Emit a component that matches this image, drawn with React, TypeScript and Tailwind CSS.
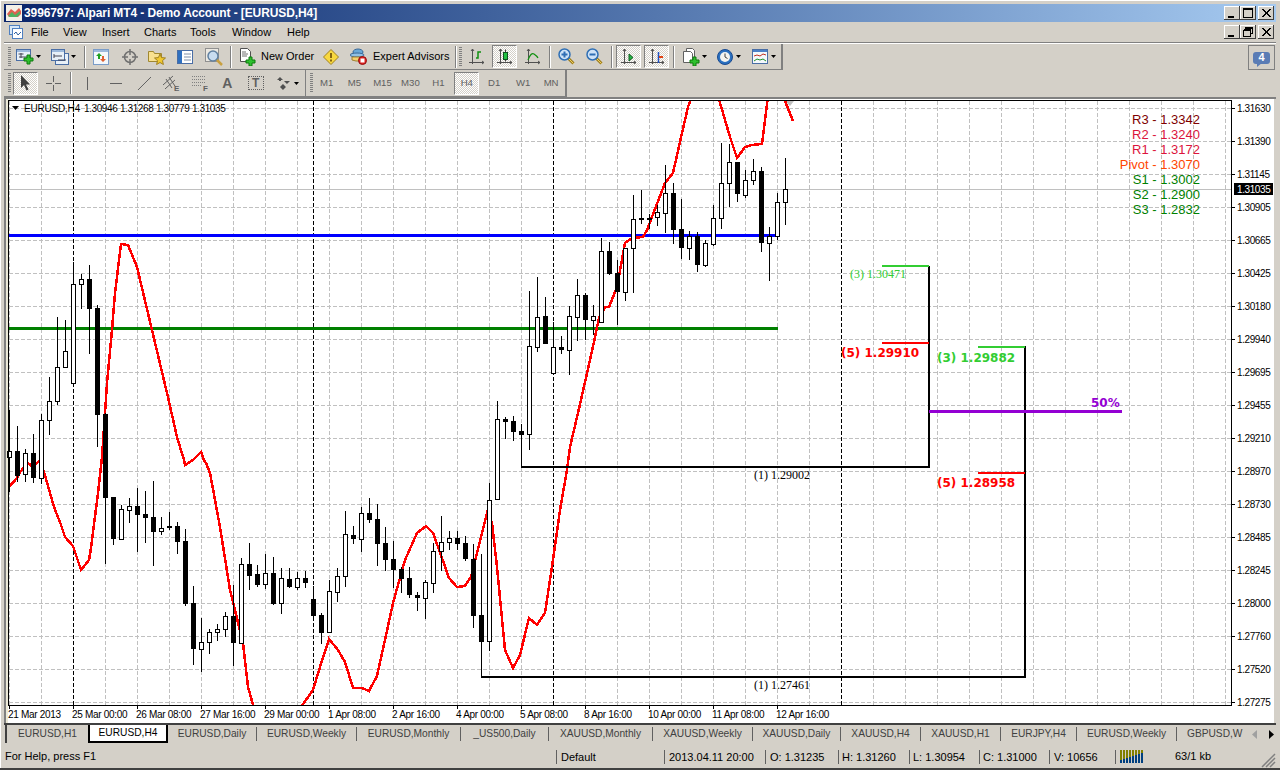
import type { ReactNode } from "react"

const candles: [number, number, number, number, number][] = [
  [410, 451, 457, 492, 0], [426, 451, 476, 482, 1], [449, 453, 474, 482, 0], [434, 453, 478, 483, 1],
  [414, 420, 478, 484, 0], [377, 401, 420, 435, 0], [317, 367, 401, 405, 0], [320, 351, 367, 367, 0],
  [262, 284, 383, 385, 0], [274, 279, 284, 309, 0], [265, 279, 309, 354, 1], [305, 308, 415, 447, 1],
  [413, 414, 498, 564, 1], [497, 497, 539, 545, 1], [505, 509, 539, 539, 0], [498, 506, 510, 523, 0],
  [488, 506, 515, 552, 1], [491, 514, 518, 543, 1], [481, 517, 532, 566, 1], [517, 528, 531, 535, 0],
  [512, 526, 528, 530, 1], [522, 526, 542, 554, 1], [529, 541, 604, 606, 1], [586, 603, 649, 665, 1],
  [618, 642, 649, 672, 0], [629, 632, 642, 654, 0], [624, 629, 632, 641, 0], [612, 616, 629, 637, 0],
  [585, 616, 643, 666, 1], [558, 564, 643, 644, 0], [543, 564, 576, 590, 1], [565, 574, 585, 587, 1],
  [554, 573, 584, 589, 0], [557, 573, 604, 605, 1], [568, 578, 603, 614, 0], [568, 579, 587, 588, 1],
  [572, 578, 587, 590, 0], [571, 578, 583, 588, 1], [586, 599, 616, 620, 1], [613, 615, 633, 644, 1],
  [580, 591, 632, 632, 0], [568, 576, 592, 602, 0], [511, 534, 576, 587, 0], [526, 535, 539, 544, 1],
  [507, 513, 539, 552, 0], [498, 513, 520, 523, 1], [504, 519, 544, 566, 1], [527, 543, 560, 571, 1],
  [541, 559, 570, 588, 1], [567, 569, 579, 593, 1], [567, 578, 595, 598, 1], [592, 595, 598, 611, 1],
  [580, 582, 598, 619, 0], [543, 551, 583, 593, 0], [516, 542, 551, 571, 0], [531, 538, 542, 550, 0],
  [531, 538, 544, 550, 1], [536, 543, 559, 561, 1], [544, 559, 616, 628, 1], [554, 615, 642, 677, 1],
  [483, 500, 641, 651, 0], [401, 419, 499, 499, 0], [417, 419, 422, 439, 1], [416, 421, 432, 441, 1],
  [424, 431, 435, 467, 1], [291, 346, 434, 450, 0], [277, 317, 347, 352, 0], [297, 316, 344, 344, 1],
  [322, 347, 373, 374, 0], [336, 347, 350, 354, 1], [306, 316, 350, 375, 0], [279, 295, 317, 341, 0],
  [293, 295, 320, 340, 1], [305, 316, 320, 335, 0], [238, 251, 322, 322, 0], [242, 251, 274, 275, 1],
  [260, 273, 292, 325, 1], [248, 248, 292, 301, 0], [195, 219, 248, 293, 0], [190, 218, 219, 224, 1],
  [214, 218, 219, 229, 1], [205, 212, 217, 226, 0], [165, 193, 213, 233, 0], [183, 193, 230, 244, 1],
  [199, 229, 248, 259, 1], [231, 236, 248, 260, 0], [232, 236, 265, 272, 1], [240, 243, 265, 267, 0],
  [205, 218, 244, 246, 0], [143, 183, 218, 229, 0], [144, 162, 183, 207, 0], [162, 162, 194, 202, 1],
  [170, 180, 195, 198, 0], [159, 171, 180, 185, 0], [167, 171, 243, 252, 1], [227, 236, 243, 281, 0],
  [193, 202, 236, 240, 0], [158, 189, 202, 225, 0],
]

const redLine =
  "8,488 17,478 20,472 28,463 33,467 39,461 44,472 50,493 55,510 60,522 65,537 73,546 81,570 89,560 91,548 98,493 102,457 105,413 107,383 112,330 115,293 121,244 128,245 137,267 152,330 167,393 177,437 184,460 185,465 193,460 201,452 204,460 206,463 210,473 220,527 230,590 243,643 248,687 255,712 298,712 306,700 313,690 320,667 329,639 338,650 345,662 353,688 362,688 369,691 377,676 385,640 393,603 405,560 417,533 426,526 433,533 442,558 449,578 457,587 465,586 471,577 482,533 487,513 492,523 497,567 505,650 513,668 520,655 529,618 537,625 545,613 553,560 560,510 567,470 570,447 578,413 590,360 595,337 599,318 605,307 609,307 617,287 625,243 632,238 643,237 647,230 665,183 673,173 682,133 688,107 692,96 718,96 730,137 737,158 745,147 752,145 762,144 765,120 768,96 783,96 793,121"

const priceLabels = [
  "1.31630", "1.31390", "1.31145", "1.30905", "1.30665", "1.30425", "1.30180", "1.29940", "1.29695", "1.29455",
  "1.29210", "1.28970", "1.28730", "1.28485", "1.28245", "1.28000", "1.27760", "1.27520", "1.27275",
]

const timeLabels = [
  "21 Mar 2013", "25 Mar 00:00", "26 Mar 08:00", "27 Mar 16:00", "29 Mar 00:00", "1 Apr 08:00", "2 Apr 16:00",
  "4 Apr 00:00", "5 Apr 08:00", "8 Apr 16:00", "10 Apr 00:00", "11 Apr 08:00", "12 Apr 16:00",
]

const pivots: [string, string, number][] = [
  ["R3 - 1.3342", "#800000", 124], ["R2 - 1.3240", "#dc143c", 139], ["R1 - 1.3172", "#dc143c", 154],
  ["Pivot - 1.3070", "#ff4500", 169], ["S1 - 1.3002", "#008000", 184], ["S2 - 1.2900", "#008000", 199],
  ["S3 - 1.2832", "#008000", 214],
]

const sans = "Liberation Sans, sans-serif"
const serif = "Liberation Serif, serif"
const heavy = "DejaVu Sans, sans-serif"

function Chart() {
  const gridX = Array.from({ length: 39 }, (_, i) => 9 + 32 * i)
  const gridY = priceLabels.map((_, i) => 108 + 33 * i)
  return (
    <svg className="block" width={1272} height={624} viewBox="4 99 1272 624" fontFamily={sans}>
      <defs>
        <clipPath id="plot">
          <rect x={9} y={101} width={1222} height={604} />
        </clipPath>
      </defs>
      <rect x={4} y={99} width={1272} height={624} fill="#ffffff" />
      <rect x={4} y={99} width={2} height={624} fill="#808080" />
      <rect x={6} y={99} width={2} height={624} fill="#ece9d8" />
      <rect x={1274} y={99} width={2} height={624} fill="#d4d0c8" />
      <g shapeRendering="crispEdges">
        {gridX.map((x) => (
          <line key={x} x1={x + 0.5} x2={x + 0.5} y1={101} y2={705} stroke="#c0c0c0" strokeDasharray="4 2" />
        ))}
        {gridY.map((y) => (
          <line key={y} x1={9} x2={1231} y1={y + 0.5} y2={y + 0.5} stroke="#c0c0c0" strokeDasharray="4 2" />
        ))}
        {[73, 313, 553, 841].map((x) => (
          <line key={x} x1={x + 0.5} x2={x + 0.5} y1={101} y2={705} stroke="#000000" strokeDasharray="4 2" />
        ))}
        <rect x={9} y={189} width={1222} height={1} fill="#c0c0c0" />
        <rect x={9} y={234} width={769} height={3} fill="#0000ff" />
        <rect x={9} y={327} width={769} height={3} fill="#008000" />
      </g>
      <polygon points="785,101 794,101 790,106" fill="#c0c0c0" />
      <g clipPath="url(#plot)">
        <polyline points={redLine} fill="none" stroke="#ff0000" strokeWidth={2.5} shapeRendering="crispEdges" />
      </g>
      <g shapeRendering="crispEdges">
        {candles.map(([hi, top, bot, lo, dark], i) => {
          const x = 9 + 8 * i
          return (
            <g key={i}>
              <rect x={x} y={hi} width={1} height={lo - hi} fill="#000000" />
              {dark ? (
                <rect x={x - 2} y={top} width={5} height={Math.max(bot - top, 2)} fill="#000000" />
              ) : (
                <rect x={x - 1.5} y={top + 0.5} width={4} height={Math.max(bot - top, 1)} fill="#ffffff" stroke="#000000" />
              )}
            </g>
          )
        })}
        <rect x={521} y={466} width={409} height={2} fill="#000000" />
        <rect x={928} y={266} width={2} height={202} fill="#000000" />
        <rect x={882} y={265} width={47} height={2} fill="#32cd32" />
        <rect x={882} y={342} width={47} height={2} fill="#ff0000" />
        <rect x={481} y={676} width={545} height={2} fill="#000000" />
        <rect x={1024} y={346} width={2} height={332} fill="#000000" />
        <rect x={978} y={346} width={47} height={2} fill="#32cd32" />
        <rect x={978} y={472} width={47} height={2} fill="#ff0000" />
        <rect x={929} y={410} width={193} height={3} fill="#9400d3" />
        <rect x={8} y={100} width={1224} height={1} fill="#000000" />
        <rect x={8} y={100} width={1} height={606} fill="#000000" />
        <rect x={1231} y={100} width={1} height={606} fill="#000000" />
        <rect x={8} y={705} width={1224} height={1} fill="#000000" />
        {gridY.map((y) => (
          <rect key={y} x={1232} y={y} width={3} height={1} fill="#000000" />
        ))}
        {timeLabels.map((_, i) => (
          <rect key={i} x={9 + 64 * i} y={706} width={1} height={3} fill="#000000" />
        ))}
      </g>

      <polygon points="12,106 19,106 15.5,110" fill="#000000" />
      <text x={24} y={112} fontSize={10} letterSpacing={-0.2}>EURUSD,H4</text>
      <text x={84} y={112} fontSize={10} letterSpacing={-0.4}>1.30946</text>
      <text x={120} y={112} fontSize={10} letterSpacing={-0.4}>1.31268</text>
      <text x={156} y={112} fontSize={10} letterSpacing={-0.4}>1.30779</text>
      <text x={192} y={112} fontSize={10} letterSpacing={-0.4}>1.31035</text>

      {pivots.map(([label, color, y]) => (
        <text key={label} x={1200} y={y} fontSize={13} fill={color} textAnchor="end">{label}</text>
      ))}

      <text x={850} y={278} fontFamily={serif} fontSize={12} fill="#32cd32">(3) 1.30471</text>
      <text x={754} y={479} fontFamily={serif} fontSize={12}>(1) 1.29002</text>
      <text x={754} y={689} fontFamily={serif} fontSize={12}>(1) 1.27461</text>
      <text x={841} y={357} fontFamily={heavy} fontWeight={700} fontSize={12} fill="#ff0000">(5) 1.29910</text>
      <text x={937} y={362} fontFamily={heavy} fontWeight={700} fontSize={12} fill="#32cd32">(3) 1.29882</text>
      <text x={937} y={487} fontFamily={heavy} fontWeight={700} fontSize={12} fill="#ff0000">(5) 1.28958</text>
      <text x={1091} y={407} fontFamily={heavy} fontWeight={700} fontSize={12} fill="#9400d3">50%</text>

      {priceLabels.map((p, i) => (
        <text key={p} x={1237} y={112 + 33 * i} fontSize={10} letterSpacing={-0.4}>{p}</text>
      ))}
      <rect x={1234} y={183} width={39} height={12} fill="#000000" />
      <text x={1237} y={193} fontSize={10} letterSpacing={-0.4} fill="#ffffff">1.31035</text>
      {timeLabels.map((t, i) => (
        <text key={t} x={8 + 64 * i} y={718} fontSize={10} letterSpacing={-0.3}>{t}</text>
      ))}
    </svg>
  )
}

function WinButton({ kind }: { kind: "min" | "max" | "restore" | "close" }) {
  return (
    <div className="flex h-[14px] w-[16px] items-center justify-center bg-[#d4d0c8] shadow-[inset_-1px_-1px_#404040,inset_1px_1px_#ffffff]">
      <svg width={12} height={10} viewBox="0 0 12 10" shapeRendering="crispEdges" fill="none" stroke="#000000">
        {kind === "min" && <path d="M2 8.5h6" strokeWidth={2} />}
        {kind === "max" && <path d="M1.5 0.5h9v9h-9zM1.5 1.5h9" />}
        {kind === "restore" && <path d="M3.5 2.5v-2h7v6h-2M1.5 3.5h7v6h-7zM1.5 2.5h7M3.5 1.5h7" />}
        {kind === "close" && <path d="M2 1l8 8M3 1l8 8M10 1l-8 8M11 1l-8 8" shapeRendering="auto" />}
      </svg>
    </div>
  )
}

function Arrow({ className = "" }: { className?: string }) {
  return (
    <svg className={className} width={5} height={3} viewBox="0 0 5 3">
      <path d="M0 0h5L2.5 3z" fill="#000000" />
    </svg>
  )
}

function Grip({ className = "" }: { className?: string }) {
  return (
    <div className={`h-[20px] w-[3px] bg-[repeating-linear-gradient(to_bottom,#808080_0_1px,transparent_1px_2px)] ${className}`} />
  )
}

function Sep({ className = "" }: { className?: string }) {
  return <div className={`h-[22px] w-[2px] border-x border-l-[#808080] border-r-[#ffffff] ${className}`} />
}

function Pressed({ className = "", children }: { className?: string; children: ReactNode }) {
  return (
    <div
      className={`flex h-[23px] w-[25px] items-center justify-center border border-t-[#808080] border-l-[#808080] border-r-[#ffffff] border-b-[#ffffff] bg-[repeating-conic-gradient(#d4d0c8_0_25%,#ffffff_0_50%)] bg-[length:2px_2px] ${className}`}
    >
      {children}
    </div>
  )
}

const plus = "M0 -4h3v3h3v3h-3v3h-3v-3h-3v-3h3z"

function Plus({ x, y }: { x: number; y: number }) {
  return <path d={plus} transform={`translate(${x} ${y})`} fill="#2ec02e" stroke="#0d7a0d" />
}

function Axes({ children }: { children?: ReactNode }) {
  return (
    <svg width={16} height={18} viewBox="0 0 16 18" fill="none">
      <path d="M3.5 1v15M0 14.5h15M2 3l1.5-2 1.5 2M13 13l2 1.5-2 1.5" stroke="#505050" />
      {children}
    </svg>
  )
}

function Lens({ sign, className = "" }: { sign: "in" | "out"; className?: string }) {
  return (
    <svg className={className} width={17} height={17} viewBox="0 0 17 17" fill="none">
      <path d="M10 10l5.5 5.5" stroke="#a08020" strokeWidth={3} />
      <path d="M10 10l5.5 5.5" stroke="#f0d060" strokeWidth={1} />
      <circle cx={6.5} cy={6.5} r={5.5} fill="#cfe3f7" stroke="#2f6fb5" strokeWidth={1.5} />
      <path d={sign === "in" ? "M3.5 6.5h6M6.5 3.5v6" : "M3.5 6.5h6"} stroke="#2f6fb5" strokeWidth={2} />
    </svg>
  )
}

function Toolbars() {
  return (
    <>
      <div className="flex h-[26px] w-[779px] items-center border-r-2 border-b border-[#808080]">
        <Grip className="ml-[4px]" />
        <svg className="ml-[5px]" width={18} height={16} viewBox="0 0 18 16">
          <rect x={0.5} y={0.5} width={14} height={11} fill="#e8f0f8" stroke="#4a6ea5" />
          <rect x={1} y={1} width={13} height={2} fill="#9db9dc" />
          <path d="M2.5 5h5M5 4v5M3 8h8" stroke="#445" fill="none" />
          <Plus x={11} y={10} />
        </svg>
        <Arrow className="ml-[2px]" />
        <svg className="ml-[10px]" width={18} height={16} viewBox="0 0 18 16">
          <rect x={4.5} y={4.5} width={13} height={11} fill="#e8f0f8" stroke="#4a6ea5" />
          <rect x={0.5} y={0.5} width={13} height={11} fill="#e8f0f8" stroke="#4a6ea5" />
          <rect x={1} y={1} width={12} height={2} fill="#9db9dc" />
          <path d="M3 5v4M3 7h8M7 11h8" stroke="#445" fill="none" />
        </svg>
        <Arrow className="ml-[2px]" />
        <Sep className="ml-[8px]" />
        <svg className="ml-[7px]" width={16} height={16} viewBox="0 0 16 16">
          <rect x={0.5} y={0.5} width={15} height={15} fill="#f4f8fc" stroke="#7a9cc8" />
          <rect x={1} y={1} width={14} height={2} fill="#9db9dc" />
          <path d="M6 4l3 3H7v3H5V7H3z" fill="#20a020" />
          <path d="M10 13l-3-3h2V7h2v3h2z" fill="#e06030" />
        </svg>
        <svg className="ml-[13px]" width={16} height={16} viewBox="0 0 16 16" fill="none" stroke="#707070">
          <circle cx={8} cy={8} r={5.5} strokeWidth={1.5} />
          <path d="M8 0v6M8 10v6M0 8h6M10 8h6" strokeWidth={1.5} />
        </svg>
        <svg className="ml-[10px]" width={18} height={16} viewBox="0 0 18 16">
          <path d="M0.5 2.5h5l1 2h7v8h-13z" fill="#f8e090" stroke="#a08830" />
          <path d="M12 5l1.6 3.6 3.9.4-3 2.6.9 3.9-3.4-2-3.4 2 .9-3.9-3-2.6 3.9-.4z" fill="#f0c830" stroke="#a08020" />
        </svg>
        <svg className="ml-[11px]" width={16} height={16} viewBox="0 0 16 16">
          <rect x={0.5} y={1.5} width={15} height={13} fill="#ffffff" stroke="#4a6ea5" />
          <rect x={1} y={2} width={4} height={12} fill="#2f70c0" />
          <path d="M7 5h7M7 8h7M7 11h7" stroke="#8090a8" />
        </svg>
        <svg className="ml-[12px]" width={18} height={18} viewBox="0 0 18 18" fill="none">
          <rect x={0.5} y={0.5} width={13} height={13} fill="#ece9e2" stroke="#909090" />
          <path d="M11 11l6 6" stroke="#c8a040" strokeWidth={2.5} />
          <circle cx={8} cy={8} r={5} fill="#c8dcf0" stroke="#6080a0" strokeWidth={1.5} />
        </svg>
        <Sep className="ml-[7px]" />
        <svg className="ml-[8px]" width={16} height={18} viewBox="0 0 16 18">
          <path d="M0.5 0.5h7l3 3v10h-10z" fill="#ffffff" stroke="#505050" />
          <path d="M2 4h4M2 6h6M2 8h5" stroke="#707070" />
          <Plus x={9} y={13} />
        </svg>
        <span className="ml-[5px] w-[51px] whitespace-nowrap text-[11px] text-[#000000]">New Order</span>
        <svg className="ml-[11px]" width={16} height={16} viewBox="0 0 16 16">
          <path d="M8 0.5L15.5 8 8 15.5 0.5 8z" fill="#f8d840" stroke="#a08020" />
          <path d="M8 4v5M8 10.5v2" stroke="#604000" strokeWidth={1.5} />
        </svg>
        <svg className="ml-[11px]" width={17} height={17} viewBox="0 0 17 17">
          <ellipse cx={8} cy={4} rx={5} ry={3} fill="#6aa8d8" stroke="#386898" />
          <ellipse cx={7} cy={7} rx={7} ry={2} fill="#90c0e4" stroke="#386898" />
          <path d="M2 9h11v4H6l-4-1z" fill="#f4d070" stroke="#a08030" />
          <circle cx={12.5} cy={12.5} r={4} fill="#e02020" stroke="#901010" />
          <rect x={10.5} y={10.5} width={4} height={4} fill="#ffffff" />
        </svg>
        <span className="ml-[6px] w-[76px] whitespace-nowrap text-[11px] text-[#000000]">Expert Advisors</span>
        <Sep className="ml-[6px]" />
        <Grip className="ml-[2px]" />
        <div className="ml-[7px]">
          <Axes>
            <path d="M7 10h2V4h3" stroke="#109010" strokeWidth={1.5} />
          </Axes>
        </div>
        <Pressed className="ml-[7px]">
          <Axes>
            <path d="M8.5 1.5v12" stroke="#404040" />
            <rect x={6.5} y={4.5} width={4} height={7} fill="#20c040" stroke="#105020" />
          </Axes>
        </Pressed>
        <div className="ml-[8px]">
          <Axes>
            <path d="M3 12q3-8 6-6t4 4" stroke="#109010" strokeWidth={1.2} />
          </Axes>
        </div>
        <Sep className="ml-[8px]" />
        <Lens sign="in" className="ml-[7px]" />
        <Lens sign="out" className="ml-[11px]" />
        <Sep className="ml-[8px]" />
        <Pressed className="ml-[3px]">
          <Axes>
            <path d="M8 6l4 3.5L8 13z" fill="#20b040" stroke="#106020" />
          </Axes>
        </Pressed>
        <Pressed className="ml-[3px]">
          <Axes>
            <path d="M9.5 4v11" stroke="#2050c0" strokeWidth={1.5} />
            <path d="M10 9h4" stroke="#e04010" strokeWidth={2} />
          </Axes>
        </Pressed>
        <Sep className="ml-[4px]" />
        <svg className="ml-[8px]" width={17} height={18} viewBox="0 0 17 18">
          <path d="M3.5 0.5h6l2 2v9h-8z" fill="#ffffff" stroke="#606060" />
          <path d="M0.5 3.5h7l2 2v9h-9z" fill="#ffffff" stroke="#606060" />
          <Plus x={10} y={13} />
        </svg>
        <Arrow className="ml-[2px]" />
        <svg className="ml-[10px]" width={16} height={16} viewBox="0 0 16 16">
          <circle cx={8} cy={8} r={7.5} fill="#2a70c0" stroke="#1a4a90" />
          <circle cx={8} cy={8} r={5} fill="#f4f4f0" />
          <path d="M8 4.5V8l2.5 1.5" stroke="#404040" fill="none" />
        </svg>
        <Arrow className="ml-[3px]" />
        <svg className="ml-[11px]" width={16} height={15} viewBox="0 0 16 15">
          <rect x={0.5} y={0.5} width={15} height={14} fill="#f4f8fc" stroke="#4a6ea5" />
          <rect x={1} y={1} width={14} height={2} fill="#4a80c8" />
          <path d="M2 7l3-1 3 1 3-2 3 1" stroke="#c03020" fill="none" />
          <path d="M2 12l3-2 3 1 3-1 3 2" stroke="#20902a" fill="none" />
        </svg>
        <Arrow className="ml-[3px]" />
      </div>
      <div className="flex h-[27px] w-[563px] items-center border-r-2 border-b border-[#808080] text-[9.6px] text-[#606060]">
        <Grip className="ml-[4px]" />
        <Pressed className="ml-[2px]">
          <svg width={10} height={16} viewBox="0 0 10 16">
            <path d="M1 0v13l3-3 2.5 5.5 2-1-2.5-5H10z" fill="#404040" />
          </svg>
        </Pressed>
        <svg className="ml-[8px]" width={15} height={15} viewBox="0 0 15 15" stroke="#606060" shapeRendering="crispEdges">
          <path d="M7.5 0v6M7.5 9v6M0 7.5h6M9 7.5h6" />
        </svg>
        <Sep className="ml-[9px]" />
        <svg className="ml-[8px]" width={15} height={15} viewBox="0 0 15 15" stroke="#606060" shapeRendering="crispEdges">
          <path d="M7.5 1v13" />
        </svg>
        <svg className="ml-[14px]" width={14} height={15} viewBox="0 0 14 15" stroke="#606060" shapeRendering="crispEdges">
          <path d="M1 7.5h12" />
        </svg>
        <svg className="ml-[14px]" width={15} height={15} viewBox="0 0 15 15" stroke="#606060">
          <path d="M1 14L14 1" />
        </svg>
        <svg className="ml-[11px]" width={17} height={17} viewBox="0 0 17 17" fill="none" stroke="#606060">
          <path d="M0 10L10 1M2 14L12 5M3 4l6 9M6 2l6 9" />
          <text x={11} y={16} fontFamily={sans} fontSize={8} fontWeight={700} fill="#606060" stroke="none">E</text>
        </svg>
        <svg className="ml-[12px]" width={16} height={17} viewBox="0 0 16 17" fill="none" stroke="#808080" shapeRendering="crispEdges" strokeDasharray="1 1">
          <path d="M0 1.5h14M0 4.5h14M0 7.5h14M0 10.5h10" />
          <text x={11} y={16} fontFamily={sans} fontSize={8} fontWeight={700} fill="#606060" stroke="none" strokeDasharray="0">F</text>
        </svg>
        <span className="ml-[13px] w-[13px] text-center text-[14px] font-bold text-[#606060]">A</span>
        <div className="ml-[14px] flex h-[14px] w-[16px] items-center justify-center border border-dotted border-[#606060] text-[12px] font-bold text-[#606060]">
          T
        </div>
        <svg className="ml-[13px]" width={15} height={15} viewBox="0 0 15 15" fill="#505050">
          <path d="M3 1l3 3H4v1H2V4H0zM7 5l3 3 3-3zM6 8l-3 3 3 3 3-3z" />
        </svg>
        <Arrow className="ml-[2px]" />
        <div className="ml-[6px] h-[26px] w-px bg-[#808080]" />
        <Grip className="ml-[4px]" />
        <span className="w-[28px] text-center">M1</span>
        <span className="w-[28px] text-center">M5</span>
        <span className="w-[28px] text-center">M15</span>
        <span className="w-[28px] text-center">M30</span>
        <span className="w-[28px] text-center">H1</span>
        <Pressed className="ml-[2px]">H4</Pressed>
        <span className="ml-[1px] w-[28px] text-center">D1</span>
        <span className="ml-[1px] w-[28px] text-center">W1</span>
        <span className="w-[28px] text-center">MN</span>
      </div>
    </>
  )
}

const Divider = () => <div className="h-[14px] w-px bg-[#606060]" />

export default function App() {
  return (
    <div className="flex h-[770px] w-[1280px] flex-col overflow-hidden bg-[#d4d0c8] font-['Liberation_Sans',sans-serif] text-[11px] text-[#000000] shadow-[inset_1px_1px_#ffffff]">
      <div className="mx-1 mt-1 flex h-[18px] items-center bg-gradient-to-r from-[#0a246a] to-[#a6caf0]">
        <svg className="ml-[2px]" width={16} height={16} viewBox="0 0 16 16">
          <rect width={16} height={16} fill="#f4f0e8" />
          <path d="M1 9l4-5 4 3 4-4 2 3v3l-3 3H3z" fill="#e06050" />
          <path d="M2 11l4-4 3 3 5-4v3l-3 3H4z" fill="#50b060" />
        </svg>
        <span className="ml-[2px] text-[12px] font-bold tracking-[-0.1px] whitespace-nowrap text-[#ffffff]">
          3996797: Alpari MT4 - Demo Account - [EURUSD,H4]
        </span>
        <div className="mr-[2px] ml-auto flex">
          <WinButton kind="min" />
          <WinButton kind="max" />
          <div className="ml-[2px]">
            <WinButton kind="close" />
          </div>
        </div>
      </div>
      <div className="mx-1 flex h-[20px] items-center">
        <svg className="ml-[5px]" width={14} height={14} viewBox="0 0 14 14">
          <rect x={0.5} y={0.5} width={10} height={9} fill="#d8e8f8" stroke="#5080c0" />
          <rect x={3.5} y={3.5} width={10} height={10} fill="#ffffff" stroke="#5080c0" />
          <path d="M5 9l2-2 2 3 3-3" stroke="#3060a0" fill="none" />
        </svg>
        <span className="ml-[8px] w-[16px]">File</span>
        <span className="ml-[16px] w-[23px]">View</span>
        <span className="ml-[16px] w-[27px]">Insert</span>
        <span className="ml-[15px] w-[32px]">Charts</span>
        <span className="ml-[14px] w-[27px]">Tools</span>
        <span className="ml-[15px] w-[39px]">Window</span>
        <span className="ml-[16px]">Help</span>
        <div className="mr-[2px] ml-auto flex">
          <WinButton kind="min" />
          <WinButton kind="restore" />
          <div className="ml-[2px]">
            <WinButton kind="close" />
          </div>
        </div>
      </div>
      <div className="mx-1 h-[2px] border-t border-b border-t-[#808080] border-b-[#ffffff]" />
      <div className="relative mx-1">
        <Toolbars />
        <div className="absolute top-[1px] right-[1px] flex h-[25px] w-[27px] items-center justify-center border border-[#808080]">
          <div className="relative flex h-[12px] w-[17px] items-center justify-center rounded-[3px] bg-[#5a7cb5] text-[11px] font-bold text-[#ffffff]">
            4
            <div className="absolute top-[11px] left-[4px] h-0 w-0 border-t-[4px] border-r-[5px] border-t-[#5a7cb5] border-r-transparent" />
          </div>
        </div>
      </div>
      <div className="mx-1 border-t-2 border-[#808080]">
        <Chart />
      </div>
      <div className="mx-1 flex h-[20px] items-center border-t-2 border-[#404040] text-[10.2px] whitespace-nowrap text-[#404040]">
        <div className="ml-[1px] flex h-full w-[83px] items-center justify-center border-l-2 border-[#404040]">EURUSD,H1</div>
        <div className="flex h-full w-[80px] items-center justify-center border-x-2 border-b-2 border-[#000000] bg-[#ffffff] text-[#000000]">EURUSD,H4</div>
        <div className="flex w-[88px] justify-center"><span>EURUSD,Daily</span></div>
        <Divider />
        <div className="flex w-[99px] justify-center">EURUSD,Weekly</div>
        <Divider />
        <div className="flex w-[103px] justify-center">EURUSD,Monthly</div>
        <Divider />
        <div className="flex w-[87px] justify-center">_US500,Daily</div>
        <Divider />
        <div className="flex w-[103px] justify-center">XAUUSD,Monthly</div>
        <Divider />
        <div className="flex w-[99px] justify-center">XAUUSD,Weekly</div>
        <Divider />
        <div className="flex w-[87px] justify-center">XAUUSD,Daily</div>
        <Divider />
        <div className="flex w-[79px] justify-center">XAUUSD,H4</div>
        <Divider />
        <div className="flex w-[79px] justify-center">XAUUSD,H1</div>
        <Divider />
        <div className="flex w-[75px] justify-center">EURJPY,H4</div>
        <Divider />
        <div className="flex w-[99px] justify-center">EURUSD,Weekly</div>
        <Divider />
        <div className="ml-[10px] w-[60px]">GBPUSD,W</div>
        <svg className="ml-[5px]" width={5} height={9} viewBox="0 0 5 9">
          <path d="M5 0v9L0 4.5z" fill="#a0a0a0" />
        </svg>
        <svg className="ml-[12px]" width={5} height={9} viewBox="0 0 5 9">
          <path d="M0 0v9l5-4.5z" fill="#000000" />
        </svg>
      </div>
      <div className="mt-[2px] flex h-[23px] items-center text-[11px] whitespace-nowrap">
        <div className="w-[556px] pl-[5px]">For Help, press F1</div>
        <div className="h-[14px] w-[108px] border-l border-[#606060] pl-[4px] leading-[14px]">Default</div>
        <div className="h-[14px] w-[101px] border-l border-[#606060] pl-[4px] leading-[14px]">2013.04.11 20:00</div>
        <div className="h-[14px] w-[73px] border-l border-[#606060] pl-[4px] leading-[14px]">O: 1.31235</div>
        <div className="h-[14px] w-[71px] border-l border-[#606060] pl-[3px] leading-[14px]">H: 1.31260</div>
        <div className="h-[14px] w-[70px] border-l border-[#606060] pl-[3px] leading-[14px]">L: 1.30954</div>
        <div className="h-[14px] w-[70px] border-l border-[#606060] pl-[3px] leading-[14px]">C: 1.31000</div>
        <div className="h-[14px] w-[66px] border-l border-[#606060] pl-[4px] leading-[14px]">V: 10656</div>
        <div className="flex h-[14px] w-[60px] items-center border-l border-[#606060] pl-[4px]">
          <svg width={24} height={13} viewBox="0 0 24 13" shapeRendering="crispEdges">
            {Array.from({ length: 8 }, (_, i) => (
              <g key={i}>
                <rect x={i * 3} y={0} width={2} height={13} fill="#808000" />
                <rect x={i * 3} y={10 - i} width={2} height={3 + i} fill="#004080" />
              </g>
            ))}
          </svg>
        </div>
        <div className="w-[50px]">63/1 kb</div>
        <svg className="ml-auto mr-[4px] self-end" width={16} height={16} viewBox="0 0 16 16" fill="none" stroke="#808080" strokeWidth={1.5}>
          <path d="M15 2L2 15M15 6L6 15M15 10l-5 5" />
        </svg>
      </div>
      <div className="h-[2px] bg-[#404040]" />
    </div>
  )
}
